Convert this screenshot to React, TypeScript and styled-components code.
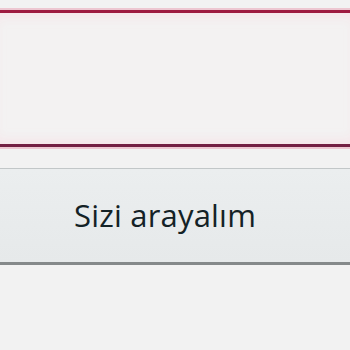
import React from "react";
import styled, { createGlobalStyle } from "styled-components";

const Global = createGlobalStyle`
  html, body { margin: 0; padding: 0; background: #f2f2f2; overflow: hidden; }
  body { font-family: "Open Sans", "Liberation Sans", sans-serif; }
`;

const Page = styled.div`
  display: flex;
  flex-direction: column;
  width: 350px;
  height: 350px;
  padding-top: 10px;
  box-sizing: border-box;
  overflow: hidden;
`;

const Field = styled.textarea`
  display: block;
  margin: 0 -12px;
  width: 374px;
  height: 137px;
  box-sizing: border-box;
  background: #f3f2f2;
  border: 3px solid #9e1a40;
  border-bottom-color: #742043;
  border-radius: 6px;
  box-shadow: 0 0 0 2px rgba(230, 120, 150, 0.35), inset 0 0 14px rgba(255, 200, 215, 0.55);
  outline: none;
  resize: none;
  font: inherit;
`;

const Button = styled.button`
  display: flex;
  align-items: center;
  justify-content: center;
  margin: 21px -12px 0;
  width: 374px;
  height: 97px;
  box-sizing: border-box;
  padding: 0 20px 2px 0;
  background: linear-gradient(#ebeeef, #e6e9ea);
  border: 1px solid #c2c7c8;
  border-bottom: 3px solid #85898a;
  border-radius: 6px;
  color: #142226;
  font-family: "Open Sans", "Liberation Sans", sans-serif;
  font-size: 31px;
  font-weight: 500;
  letter-spacing: 0.2px;
  cursor: pointer;
`;

export default function App() {
  return (
    <>
      <Global />
      <Page>
        <Field aria-label="input" />
        <Button>Sizi arayalım</Button>
      </Page>
    </>
  );
}
